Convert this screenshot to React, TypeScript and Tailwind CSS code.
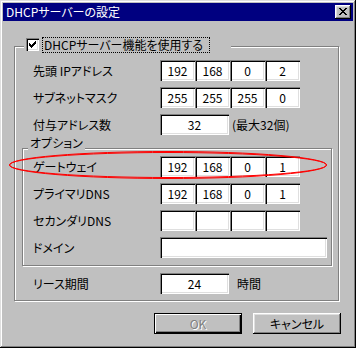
import React from "react";

const sunken =
  "shadow-[inset_1px_1px_#808080,inset_2px_2px_#000,inset_-1px_-1px_#fff,inset_-2px_-2px_#dfdfdf]";

function Pixels({ rows, color }: { rows: string[]; color: string }) {
  const rects: React.ReactNode[] = [];
  rows.forEach((r, y) =>
    r.split("").forEach((c, x) => {
      if (c === "X")
        rects.push(<rect key={`${x}-${y}`} x={x} y={y} width={1} height={1} fill={color} />);
    })
  );
  return (
    <svg width={rows[0].length} height={rows.length} shapeRendering="crispEdges" className="block">
      {rects}
    </svg>
  );
}

const closeGlyph = [
  "XX....XX",
  ".XX..XX.",
  "..XXXX..",
  "...XX...",
  "..XXXX..",
  ".XX..XX.",
  "XX....XX",
];

const checkGlyph = [
  "......X",
  ".....XX",
  "X...XXX",
  "XX.XXX.",
  "XXXXX..",
  ".XXX...",
  "..X....",
];

function Field({ value, className }: { value?: string; className: string }) {
  return (
    <div
      className={`${sunken} bg-white h-[21px] flex items-center justify-center text-[12px] leading-none text-black ${className}`}
    >
      {value}
    </div>
  );
}

function IpRow({ label, values }: { label: string; values: string[] }) {
  return (
    <div className="flex items-center h-[21px]">
      <div className="w-[127px] text-[12px] leading-none">{label}</div>
      <div className="flex">
        {values.map((v, i) => (
          <Field key={i} value={v} className="w-[35px]" />
        ))}
      </div>
    </div>
  );
}

export default function App() {
  return (
    <div className="relative w-[356px] h-[348px] bg-[#c0c0c0] p-[3px] shadow-[inset_-1px_-1px_#000,inset_1px_1px_#dfdfdf,inset_-2px_-2px_#808080,inset_2px_2px_#fff] font-['Noto_Sans_CJK_JP',sans-serif] [font-feature-settings:'palt'] text-black">
      {/* Title bar */}
      <div className="h-[18px] bg-[#000080] flex items-center justify-between pl-[3px] pr-[2px]">
        <span className="text-white text-[12px] leading-none">DHCPサーバーの設定</span>
        <div className="w-[16px] h-[14px] bg-[#c0c0c0] shadow-[inset_-1px_-1px_#000,inset_1px_1px_#fff,inset_-2px_-2px_#808080,inset_2px_2px_#dfdfdf] pl-[4px] pt-[3px]">
          <Pixels rows={closeGlyph} color="#000" />
        </div>
      </div>

      {/* Main group */}
      <div className="relative ml-[11px] mt-[25px] w-[325px] border border-[#808080] shadow-[inset_1px_1px_#fff,1px_1px_#fff] pt-[13px] pb-[6px]">
        <div className="absolute left-[9px] top-[-10px] w-[207px] h-[16px] bg-[#c0c0c0] flex items-start">
          <div className={`ml-[2px] mt-[1px] w-[13px] h-[13px] bg-white ${sunken} pl-[3px] pt-[3px]`}>
            <Pixels rows={checkGlyph} color="#000" />
          </div>
          <div className="ml-[3px] w-[168px] h-[16px] border border-dotted border-black flex items-center pl-[1px] text-[12px] leading-none">
            DHCPサーバー機能を使用する
          </div>
        </div>

        <div className="pl-[18px] flex flex-col gap-[6px]">
          <IpRow label="先頭 IPアドレス" values={["192", "168", "0", "2"]} />
          <IpRow label="サブネットマスク" values={["255", "255", "255", "0"]} />
          <div className="flex items-center h-[21px]">
            <div className="w-[127px] text-[12px] leading-none">付与アドレス数</div>
            <Field value="32" className="w-[69px]" />
            <span className="ml-[3px] text-[12px] leading-none">(最大32個)</span>
          </div>
        </div>

        {/* Options group */}
        <div className="relative ml-[7px] mt-[13px] w-[310px] border border-[#808080] shadow-[inset_1px_1px_#fff,1px_1px_#fff] pt-[7px] pb-[7px] pl-[10px] flex flex-col gap-[6px]">
          <div className="absolute left-[5px] top-[-13px] bg-[#c0c0c0] px-[2px] text-[12px] leading-[14px]">
            オプション
          </div>
          <IpRow label="ゲートウェイ" values={["192", "168", "0", "1"]} />
          <IpRow label="プライマリDNS" values={["192", "168", "0", "1"]} />
          <IpRow label="セカンダリDNS" values={["", "", "", ""]} />
          <div className="flex items-center h-[21px]">
            <div className="w-[127px] text-[12px] leading-none">ドメイン</div>
            <Field className="w-[167px]" />
          </div>
        </div>

        <div className="pl-[18px] mt-[7px] flex items-center h-[21px]">
          <div className="w-[127px] text-[12px] leading-none">リース期間</div>
          <Field value="24" className="w-[69px]" />
          <span className="ml-[8px] text-[12px] leading-none">時間</span>
        </div>
      </div>

      {/* Buttons */}
      <div className="flex mt-[12px] ml-[151px] gap-[11px]">
        <div className="w-[88px] h-[21px] border border-black bg-[#c0c0c0] shadow-[inset_1px_1px_#fff,inset_-1px_-1px_#000,inset_-2px_-2px_#808080] flex items-center justify-center text-[12px] leading-none text-[#808080] [text-shadow:1px_1px_0_#fff]">
          OK
        </div>
        <div className="w-[88px] h-[21px] bg-[#c0c0c0] shadow-[inset_-1px_-1px_#000,inset_1px_1px_#fff,inset_-2px_-2px_#808080,inset_2px_2px_#dfdfdf] flex items-center justify-center text-[12px] leading-none">
          キャンセル
        </div>
      </div>

      {/* Red annotation ellipse */}
      <svg
        className="absolute left-0 top-0 pointer-events-none"
        width={356}
        height={348}
        viewBox="0 0 356 348"
      >
        <ellipse cx={168} cy={165} rx={158.5} ry={13.5} fill="none" stroke="#ff0000" strokeWidth={1} />
        <ellipse cx={168} cy={165} rx={158.5} ry={12.5} fill="none" stroke="#ff0000" strokeWidth={1} />
      </svg>
    </div>
  );
}
